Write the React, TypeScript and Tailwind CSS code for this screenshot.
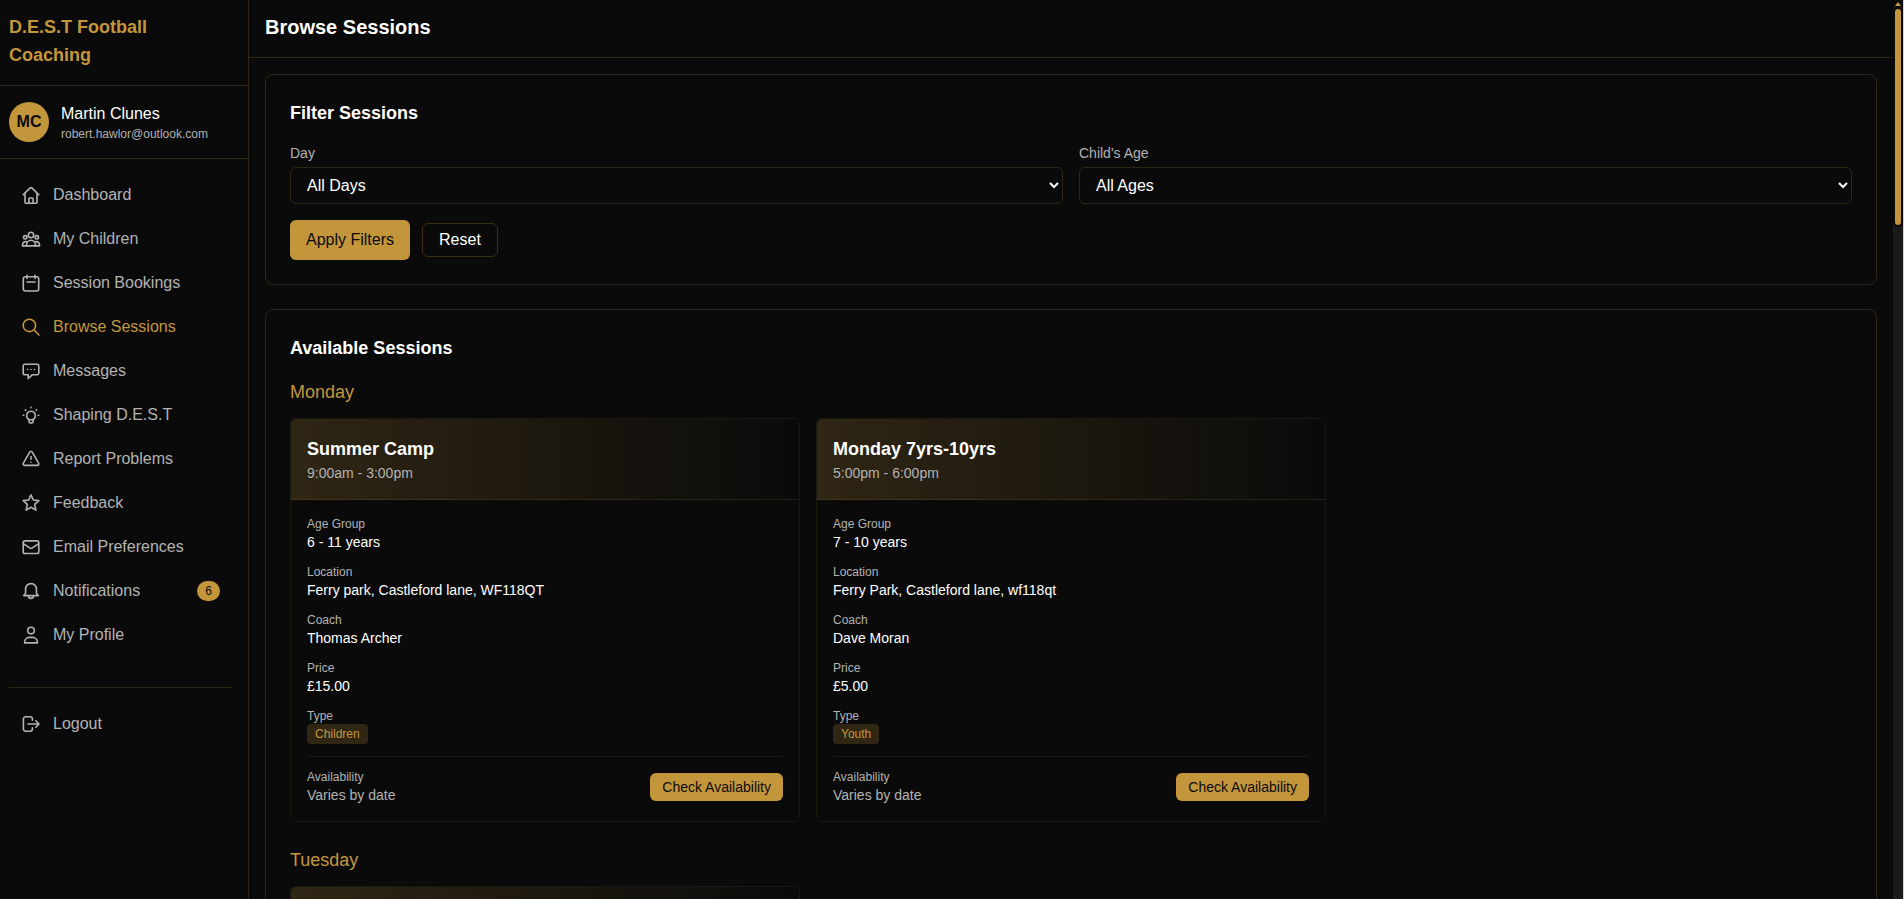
import type { ReactNode } from 'react'

interface NavItem {
  label: string
  icon: ReactNode
  active?: boolean
  badge?: number
}

interface Session {
  name: string
  time: string
  ageGroup: string
  location: string
  coach: string
  price: string
  type: string
}

const Icon = ({ children }: { children: ReactNode }) => (
  <svg
    viewBox="0 0 20 20"
    className="size-5 fill-none stroke-current stroke-[1.6]"
    strokeLinecap="round"
    strokeLinejoin="round"
    aria-hidden="true"
  >
    {children}
  </svg>
)

const icons = {
  home: (
    <Icon>
      <path d="M2.2 9.8 9.2 2.9a1.2 1.2 0 0 1 1.6 0l7 6.9" />
      <path d="M4 8.4v9a.8.8 0 0 0 .8.8h10.4a.8.8 0 0 0 .8-.8v-9" />
      <path d="M7.9 18v-4a1 1 0 0 1 1-1h2.2a1 1 0 0 1 1 1v4" />
    </Icon>
  ),
  children: (
    <Icon>
      <circle cx="10" cy="6" r="2.7" />
      <circle cx="4.2" cy="8.3" r="1.7" />
      <circle cx="15.8" cy="8.3" r="1.7" />
      <path d="M5.6 16.9v-1.3a4.4 4.4 0 0 1 8.8 0v1.3z" />
      <path d="M5.4 12.7a3.2 3.2 0 0 0-3.9 2.9v1.3h4M14.6 12.7a3.2 3.2 0 0 1 3.9 2.9v1.3h-4" />
    </Icon>
  ),
  calendar: (
    <Icon>
      <rect x="2.3" y="3.8" width="15.4" height="14.2" rx="2.2" />
      <path d="M6 2.2v3.2M14 2.2v3.2M6 9h8" />
    </Icon>
  ),
  search: (
    <Icon>
      <circle cx="8.4" cy="8.4" r="6.2" />
      <path d="m13 13 5 5" />
    </Icon>
  ),
  message: (
    <Icon>
      <path d="M4 3.3h12A1.8 1.8 0 0 1 17.8 5v7a1.8 1.8 0 0 1-1.8 1.8h-4.8l-4 3.7v-3.7H4A1.8 1.8 0 0 1 2.2 12V5A1.8 1.8 0 0 1 4 3.300z" />
      <path d="M6.600 8.500h.01M10 8.500h.01M13.400 8.500h.01" />
    </Icon>
  ),
  bulb: (
    <Icon>
      <path d="M7.900 14.500a4.400 4.400 0 1 1 4.200 0v2a1.400 1.400 0 0 1-1.400 1.400H9.300a1.400 1.400 0 0 1-1.400-1.400z" />
      <path d="M8 14.800h4M10 2.400v.4M2.200 10.300h.6M17.200 10.300h.6M4.400 4.900l.4.400M15.600 4.900l-.4.400" />
    </Icon>
  ),
  alert: (
    <Icon>
      <path d="M8.700 3.200a1.500 1.500 0 0 1 2.600 0l6.300 10.900a1.500 1.500 0 0 1-1.300 2.300H3.700a1.500 1.500 0 0 1-1.300-2.300z" />
      <path d="M10 7.600v2.600M10 13.200v.1" />
    </Icon>
  ),
  star: (
    <Icon>
      <path d="m10 1.900 2.300 5.100 5.500.6-4.100 3.800 1.200 5.700L10 14.300l-4.900 2.800 1.200-5.700-4.100-3.800 5.500-.6z" />
    </Icon>
  ),
  mail: (
    <Icon>
      <rect x="2.200" y="3.900" width="15.600" height="12.600" rx="1.800" />
      <path d="m2.600 6.800 6.500 4.400a1.600 1.600 0 0 0 1.800 0l6.500-4.400" />
    </Icon>
  ),
  bell: (
    <Icon>
      <path d="M4.600 12.200V8a5.400 5.400 0 0 1 10.800 0v4.200l1.900 2.400H2.700z" />
      <path d="M7.400 14.800a2.600 2.600 0 0 0 5.200 0" />
    </Icon>
  ),
  user: (
    <Icon>
      <circle cx="10" cy="5.600" r="3.300" />
      <path d="M3.600 17.900v-.7a4.800 4.800 0 0 1 4.800-4.800h3.200a4.800 4.800 0 0 1 4.800 4.800v.7z" />
    </Icon>
  ),
  logout: (
    <Icon>
      <path d="M11.400 6.200V5a2.200 2.200 0 0 0-2.200-2.200H4.600A2.200 2.200 0 0 0 2.400 5v10a2.200 2.200 0 0 0 2.200 2.200h4.600a2.200 2.200 0 0 0 2.200-2.200v-1.200" />
      <path d="M7 10h11M14.800 6.800 18 10l-3.200 3.200" />
    </Icon>
  )
}

const navItems: NavItem[] = [
  { label: 'Dashboard', icon: icons.home },
  { label: 'My Children', icon: icons.children },
  { label: 'Session Bookings', icon: icons.calendar },
  { label: 'Browse Sessions', icon: icons.search, active: true },
  { label: 'Messages', icon: icons.message },
  { label: 'Shaping D.E.S.T', icon: icons.bulb },
  { label: 'Report Problems', icon: icons.alert },
  { label: 'Feedback', icon: icons.star },
  { label: 'Email Preferences', icon: icons.mail },
  { label: 'Notifications', icon: icons.bell, badge: 6 },
  { label: 'My Profile', icon: icons.user }
]

const schedule: { day: string; sessions: Session[] }[] = [
  {
    day: 'Monday',
    sessions: [
      {
        name: 'Summer Camp',
        time: '9:00am - 3:00pm',
        ageGroup: '6 - 11 years',
        location: 'Ferry park, Castleford lane, WF118QT',
        coach: 'Thomas Archer',
        price: '£15.00',
        type: 'Children'
      },
      {
        name: 'Monday 7yrs-10yrs',
        time: '5:00pm - 6:00pm',
        ageGroup: '7 - 10 years',
        location: 'Ferry Park, Castleford lane, wf118qt',
        coach: 'Dave Moran',
        price: '£5.00',
        type: 'Youth'
      }
    ]
  },
  {
    day: 'Tuesday',
    sessions: [
      {
        name: 'Summer Camp',
        time: '9:00am - 3:00pm',
        ageGroup: '6 - 11 years',
        location: 'Ferry park, Castleford lane, WF118QT',
        coach: 'Thomas Archer',
        price: '£15.00',
        type: 'Children'
      }
    ]
  }
]

const NavLink = ({ label, icon, active, badge }: NavItem) => (
  <a
    href="#"
    className={`flex h-11 items-center px-3 ${active ? 'text-[#c4963c]' : 'text-[#b3b3b3]'}`}
  >
    <span className="mr-3">{icon}</span>
    <span>{label}</span>
    {badge !== undefined && (
      <span className="ml-auto rounded-full bg-[#c4963c] px-2 py-0.5 text-xs text-[#0a0a0a]">
        {badge}
      </span>
    )}
  </a>
)

const Sidebar = () => (
  <aside className="flex w-[249px] shrink-0 flex-col border-r border-[#2f2615]">
    <div className="border-b border-[#2f2615] pt-[13px] pr-8 pb-4 pl-[9px]">
      <h1 className="text-lg leading-7 font-bold text-[#c4963c]">D.E.S.T Football Coaching</h1>
    </div>
    <div className="flex items-center gap-3 border-b border-[#2f2615] px-[9px] py-4">
      <div className="flex size-10 items-center justify-center rounded-full bg-[#c4963c] font-bold text-[#0a0a0a]">
        MC
      </div>
      <div>
        <p className="leading-6 text-white">Martin Clunes</p>
        <p className="text-xs text-[#b3b3b3]">robert.hawlor@outlook.com</p>
      </div>
    </div>
    <nav className="py-[14px] pr-4 pl-[9px]">
      {navItems.map((item) => (
        <NavLink key={item.label} {...item} />
      ))}
      <div className="mt-[30px] border-t border-[#2f2615] pt-[14px]">
        <NavLink label="Logout" icon={icons.logout} />
      </div>
    </nav>
  </aside>
)

interface FilterSelectProps {
  id: string
  label: string
  options: string[]
}

const FilterSelect = ({ id, label, options }: FilterSelectProps) => (
  <div>
    <label htmlFor={id} className="mb-1 block text-sm text-[#b3b3b3]">
      {label}
    </label>
    <select
      id={id}
      className="block h-[37px] w-full rounded-md border border-[#2f2615] bg-[#0a0a0a] px-3 text-white"
    >
      {options.map((option) => (
        <option key={option}>{option}</option>
      ))}
    </select>
  </div>
)

const Field = ({ label, children }: { label: string; children: ReactNode }) => (
  <div>
    <p className="text-xs text-[#b3b3b3]">{label}</p>
    {children}
  </div>
)

const SessionCard = ({ session }: { session: Session }) => (
  <article className="overflow-hidden rounded-md border border-[#1b1812]">
    <header className="border-b border-[#c4963c]/15 bg-linear-to-r from-[#c4963c]/20 to-transparent p-4">
      <h4 className="text-lg font-bold text-white">{session.name}</h4>
      <p className="text-sm text-[#b3b3b3]">{session.time}</p>
    </header>
    <div className="p-4">
      <div className="flex flex-col gap-3">
        <Field label="Age Group">
          <p className="text-sm text-white">{session.ageGroup}</p>
        </Field>
        <Field label="Location">
          <p className="text-sm text-white">{session.location}</p>
        </Field>
        <Field label="Coach">
          <p className="text-sm text-white">{session.coach}</p>
        </Field>
        <Field label="Price">
          <p className="text-sm text-white">{session.price}</p>
        </Field>
        <Field label="Type">
          <p className="w-fit rounded bg-[#c4963c]/20 px-2 py-0.5 text-xs text-[#c4963c]">
            {session.type}
          </p>
        </Field>
      </div>
      <div className="mt-3 flex items-center justify-between border-t border-[#1b1812] pt-3">
        <Field label="Availability">
          <p className="text-sm text-[#b3b3b3]">Varies by date</p>
        </Field>
        <button
          type="button"
          className="rounded-md bg-[#c4963c] px-3 py-1 text-sm text-[#0a0a0a]"
        >
          Check Availability
        </button>
      </div>
    </div>
  </article>
)

const Scrollbar = () => (
  <div className="w-[11px] shrink-0 border-r border-[#d4d4d4] bg-[#1a1a1a]">
    <div className="flex h-[7px] justify-center bg-[#0a0a0a] pt-0.5">
      <svg viewBox="0 0 6 4" className="h-1 w-1.5 fill-[#c4963c]">
        <path d="M3 0 6 4H0z" />
      </svg>
    </div>
    <div className="h-[220px] rounded-full border-2 border-[#0a0a0a] bg-[#c4963c]" />
  </div>
)

const App = () => (
  <div className="flex h-screen overflow-hidden bg-[#0a0a0a] font-['Liberation_Sans',Arial,sans-serif] text-base">
    <Sidebar />
    <div className="min-w-0 flex-1 overflow-y-auto [scrollbar-width:none]">
      <header className="border-b border-[#2f2615] px-4 pt-[13px] pb-4">
        <h2 className="text-xl font-bold text-white">Browse Sessions</h2>
      </header>
      <main className="flex flex-col gap-6 p-4">
        <section className="rounded-lg border border-[#2f2615] p-6">
          <h3 className="mb-4 text-lg font-bold text-white">Filter Sessions</h3>
          <form>
            <div className="grid grid-cols-2 gap-4">
              <FilterSelect id="day" label="Day" options={['All Days', 'Monday', 'Tuesday']} />
              <FilterSelect id="age" label="Child's Age" options={['All Ages', '6', '7', '8']} />
            </div>
            <div className="mt-4 flex items-center gap-3">
              <button type="button" className="rounded-md bg-[#c4963c] px-4 py-2 text-[#0a0a0a]">
                Apply Filters
              </button>
              <button
                type="reset"
                className="rounded-md border border-[#3a2e18] px-4 py-1 text-white"
              >
                Reset
              </button>
            </div>
          </form>
        </section>
        <section className="rounded-lg border border-[#2f2615] p-6">
          <h3 className="mb-4 text-lg font-bold text-white">Available Sessions</h3>
          <div className="flex flex-col gap-6">
            {schedule.map(({ day, sessions }) => (
              <div key={day}>
                <h4 className="mb-3 text-lg text-[#c4963c]">{day}</h4>
                <div className="grid grid-cols-3 gap-4">
                  {sessions.map((session) => (
                    <SessionCard key={session.name} session={session} />
                  ))}
                </div>
              </div>
            ))}
          </div>
        </section>
      </main>
    </div>
    <Scrollbar />
  </div>
)

export default App
